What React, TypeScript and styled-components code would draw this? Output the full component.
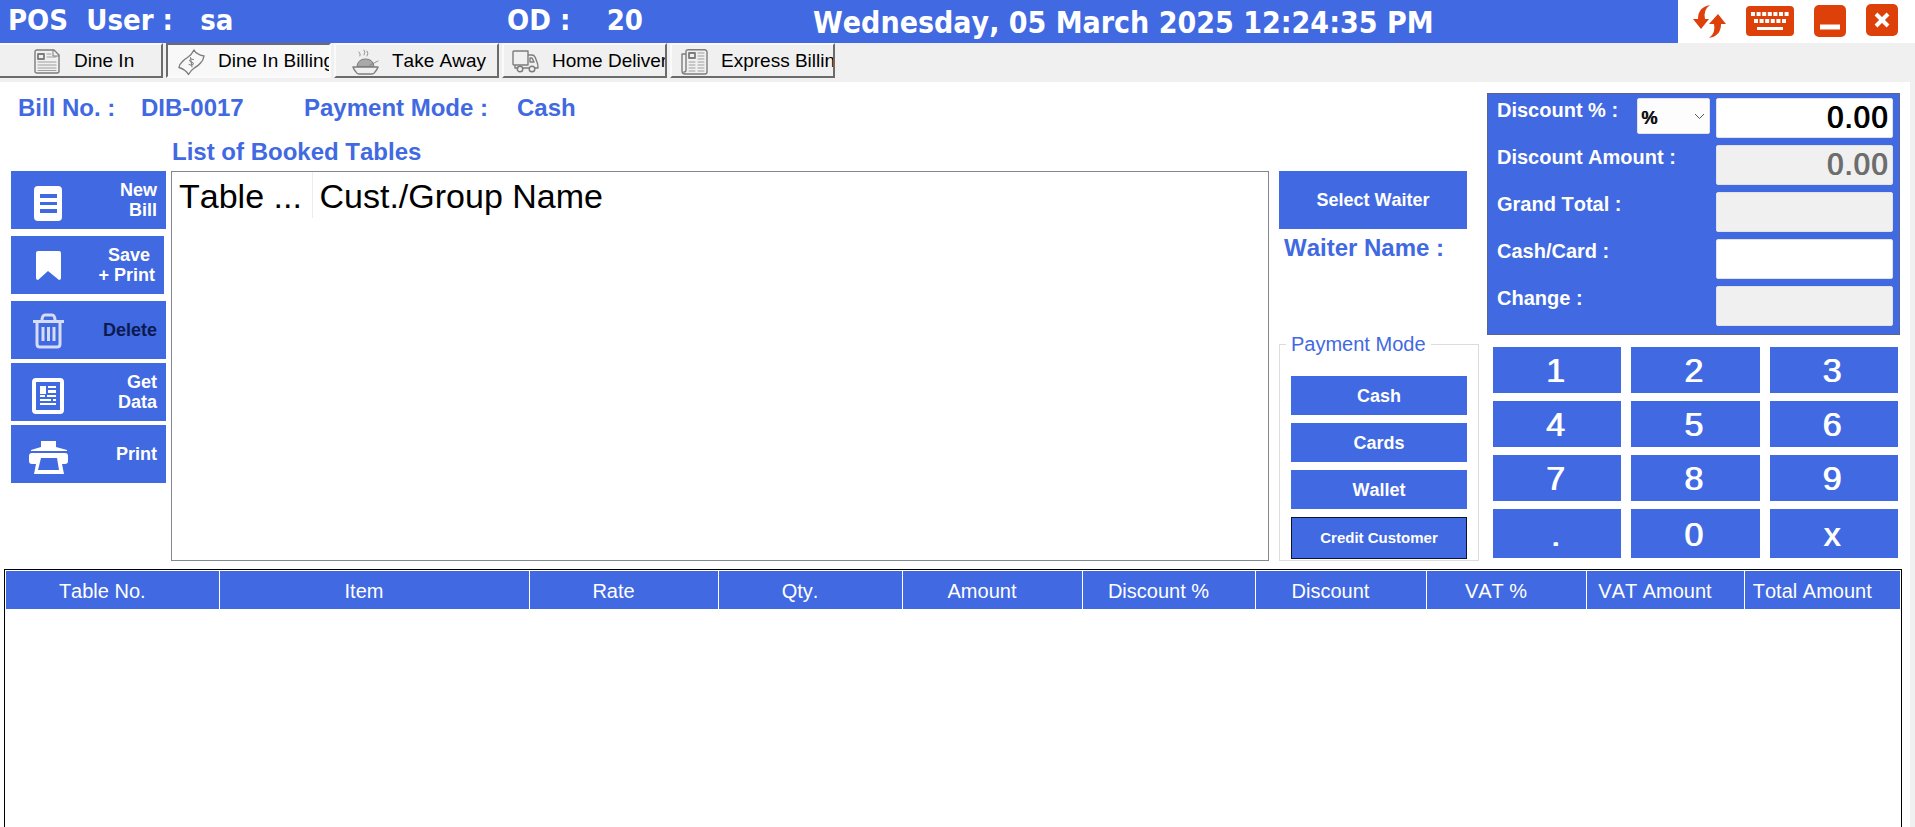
import React, { ReactNode } from "react";
import styled, { createGlobalStyle } from "styled-components";

const BLUE = "#4169e1";
const RED = "#dd4009";
const GREY = "#f0f0f0";

const GlobalStyle = createGlobalStyle`
  *, *::before, *::after { box-sizing: border-box; }
  body {
    margin: 0;
    background: #ffffff;
    color: #000000;
    font-family: "Liberation Sans", Arial, sans-serif;
    font-size: 20px;
    font-kerning: none;
  }
  button, input, select { font-family: inherit; font-kerning: none; margin: 0; }
`;

const Page = styled.div`
  min-height: 100vh;
  display: flex;
  flex-direction: column;
`;

const TopBar = styled.header`
  display: flex;
  height: 43px;
`;

const Banner = styled.div`
  flex: 1;
  display: grid;
  grid-template-columns: 499px 306px 1fr;
  align-items: start;
  padding-left: 8px;
  background: ${BLUE};
  color: #ffffff;
  font-family: "DejaVu Sans Condensed", "DejaVu Sans", sans-serif;
  font-stretch: condensed;
  font-weight: bold;
  font-size: 29px;
  line-height: 40px;
  white-space: pre;
  time { padding-top: 3px; font-size: 30px; }
`;

const WindowTools = styled.nav`
  width: 237px;
  display: flex;
  align-items: center;
  justify-content: space-between;
  padding: 0 17px 2px 15px;
`;

const ToolButton = styled.button`
  display: flex;
  border: 0;
  padding: 0;
  background: none;
  cursor: pointer;
`;

const TabBar = styled.nav`
  display: flex;
  gap: 3px;
  height: 39px;
  padding-bottom: 4px;
  background: ${GREY};
`;

const Tab = styled.button<{ $active?: boolean; $first?: boolean; $indent: number }>`
  width: ${(p) => (p.$first ? 163 : 165)}px;
  display: flex;
  align-items: center;
  gap: 13px;
  padding: 0 0 0 ${(p) => p.$indent}px;
  overflow: hidden;
  border: 2px solid;
  border-color: ${(p) =>
    p.$active ? "#6b6b6b #fafafa #fafafa #6b6b6b" : "#fafafa #6b6b6b #6b6b6b #fafafa"};
  border-left-width: ${(p) => (p.$first ? 0 : 2)}px;
  background: ${(p) => (p.$active ? "#f8f8f8" : GREY)};
  color: #000000;
  font-size: 19px;
  line-height: 24px;
  white-space: nowrap;
  svg { flex: none; margin-top: 4px; }
`;

const Workspace = styled.main`
  flex: 1;
  display: flex;
  flex-direction: column;
  gap: 8px;
  padding: 11px 8px 0 4px;
  border-right: 5px solid ${GREY};
`;

const Upper = styled.div`
  display: flex;
  gap: 8px;
  padding: 0 2px 0 7px;
`;

const Booking = styled.section`
  flex: 1;
  min-width: 0;
  display: flex;
  flex-direction: column;
`;

const InfoRow = styled.div`
  display: grid;
  grid-template-columns: 123px 163px 213px 1fr;
  padding-left: 7px;
`;

const Label = styled.span`
  color: ${BLUE};
  font-weight: bold;
  font-size: 24px;
  line-height: 30px;
  white-space: nowrap;
`;

const ListTitle = styled.h2`
  margin: 14px 0 4px 161px;
  color: ${BLUE};
  font-weight: bold;
  font-size: 24px;
  line-height: 30px;
`;

const BookingBody = styled.div`
  flex: 1;
  display: flex;
`;

const Actions = styled.div`
  width: 155px;
  display: flex;
  flex-direction: column;
  gap: 7px;
`;

const ActionGroup = styled.div`
  display: flex;
  flex-direction: column;
  gap: 4px;
`;

const ActionButton = styled.button<{ $short?: boolean }>`
  width: ${(p) => (p.$short ? 153 : 155)}px;
  height: 58px;
  display: flex;
  align-items: center;
  justify-content: space-between;
  border: 0;
  padding: 0 9px 0 15px;
  background: ${BLUE};
  color: #ffffff;
  font-weight: bold;
  font-size: 18px;
  line-height: 20px;
  text-align: right;
  white-space: pre;
  &:disabled { color: #0b1b52; }
  svg { flex: none; }
`;

const BookedList = styled.div`
  flex: 1;
  min-width: 0;
  margin: 0 10px 0 5px;
  border: 1px solid #828790;
`;

const BookedTable = styled.table`
  width: 100%;
  border-collapse: collapse;
  table-layout: fixed;
  th {
    height: 46px;
    padding: 2px 0 0 7px;
    font-weight: normal;
    font-size: 34px;
    line-height: 40px;
    text-align: left;
    white-space: nowrap;
  }
  th:first-child { width: 140px; border-right: 1px solid #ececec; }
`;

const WaiterColumn = styled.div`
  width: 200px;
  display: flex;
  flex-direction: column;
`;

const BlueButton = styled.button<{ $tall?: boolean; $small?: boolean; $focused?: boolean }>`
  height: ${(p) => (p.$tall ? 58 : p.$focused ? 42 : 39)}px;
  border: ${(p) => (p.$focused ? "1px solid #0a1430" : "0")};
  padding: 0;
  background: ${BLUE};
  color: #ffffff;
  font-weight: bold;
  font-size: ${(p) => (p.$small ? 15 : 18)}px;
  line-height: 20px;
`;

const WaiterTop = styled.div`
  display: flex;
  flex-direction: column;
  gap: 4px;
  padding-right: 12px;
  ${Label} { padding-left: 5px; }
`;

const PaymentModes = styled.fieldset`
  min-width: 0;
  margin: auto 0 0;
  display: flex;
  flex-direction: column;
  gap: 8px;
  border: 1px solid #dcdcdc;
  padding: 20px 11px 1px;
  legend {
    margin-left: -5px;
    padding: 0 5px;
    color: ${BLUE};
    font-size: 20px;
    line-height: 24px;
  }
`;

const Billing = styled.section`
  width: 413px;
  display: flex;
  flex-direction: column;
  gap: 12px;
`;

const Totals = styled.div`
  display: grid;
  grid-template-columns: 1fr 73px 177px;
  gap: 7px 6px;
  border: 1px solid #5a6492;
  padding: 4px 6px 8px 9px;
  background: ${BLUE};
`;

const TotalLabel = styled.label<{ $wide?: boolean }>`
  grid-column: ${(p) => (p.$wide ? "span 2" : "auto")};
  color: #ffffff;
  font-weight: bold;
  font-size: 20px;
  line-height: 24px;
  white-space: nowrap;
`;

const Amount = styled.input`
  width: 100%;
  height: 40px;
  border: 1px solid #e3e3e3;
  border-radius: 2px;
  padding: 0 4px 2px;
  background: #ffffff;
  color: #000000;
  font-family: "DejaVu Sans Condensed", "DejaVu Sans", sans-serif;
  font-stretch: condensed;
  font-size: 31px;
  text-align: right;
  text-shadow: 1px 0 0 currentColor;
  &:disabled { background: ${GREY}; color: #6d6d6d; }
`;

const SelectBox = styled.div`
  position: relative;
  height: 36px;
  select {
    width: 100%;
    height: 100%;
    appearance: none;
    border: 1px solid #e3e3e3;
    border-radius: 2px;
    padding: 4px 0 0 3px;
    background: #fdfdfd;
    color: #000000;
    font-size: 18px;
    text-shadow: 1px 0 0 currentColor;
  }
  svg {
    position: absolute;
    right: 5px;
    top: 15px;
    pointer-events: none;
  }
`;

const Keypad = styled.div`
  display: grid;
  grid-template-columns: repeat(3, 1fr);
  grid-template-rows: 46px 46px 46px 49px;
  gap: 8px 10px;
  padding: 0 2px 3px 6px;
`;

const Key = styled.button`
  border: 0;
  padding: 0 4px 0 0;
  background: ${BLUE};
  color: #ffffff;
  font-size: 34px;
  line-height: 40px;
  text-shadow: 1px 0 0 currentColor;
`;

const OrderGrid = styled.div`
  flex: 1;
  border: 1px solid #000000;
  border-bottom: 0;
  padding: 1px;
`;

const OrderTable = styled.table`
  width: 100%;
  border-collapse: collapse;
  table-layout: fixed;
  th {
    height: 38px;
    padding: 1px 20px 0 0;
    background: ${BLUE};
    color: #ffffff;
    font-weight: normal;
    font-size: 20px;
    line-height: 24px;
    text-align: center;
    white-space: nowrap;
  }
  th + th { border-left: 1px solid #ffffff; }
`;

const TabIcon = ({ children }: { children: ReactNode }) => (
  <svg width="27" height="27" viewBox="0 0 27 27" fill="none" stroke="#7c7c7c" strokeWidth="1.4" strokeLinejoin="round" strokeLinecap="round" aria-hidden="true">
    {children}
  </svg>
);

const ActionIcon = ({ children, muted }: { children: ReactNode; muted?: boolean }) => (
  <svg width="44" height="46" viewBox="0 0 44 46" fill={muted ? "#d5dcf5" : "#ffffff"} aria-hidden="true">
    {children}
  </svg>
);

const tabs = [
  {
    name: "Dine In",
    indent: 34,
    icon: (
      <TabIcon>
        <path d="M4 1H20L25 6V22Q25 24 23 24H3Q1 24 1 22V3Q1 1 3 1Z" />
        <path d="M19 1V7H25" strokeWidth="1" />
        <rect x="4" y="5" width="6" height="5" strokeWidth="1.8" />
        <path d="M13 5H17M13 8H22M4 13H22M4 16H22M4 19H22M4 21.500H22" strokeWidth="0.7" />
      </TabIcon>
    ),
  },
  {
    name: "Dine In Billing",
    indent: 10,
    icon: (
      <TabIcon>
        <path d="M16 1Q17.500 4 19.500 4.500Q22 6.500 26 7Q25.500 11 22.500 14Q20 17 17 18.500Q13 21 10.500 25.500Q9 23 7 21.500Q4.500 19.500 1 18.500Q1.500 15 4.500 12.500Q6 10.500 9.500 8.500Q13.500 6 16 1Z" />
        <path d="M15.500 10.500Q12 9 11.500 11.200Q11.500 13 13.500 13Q16 13.500 15.200 15.500Q13.500 17 11 15.500M12.500 8.500L14 18" strokeWidth="1" />
      </TabIcon>
    ),
  },
  {
    name: "Take Away",
    indent: 16,
    icon: (
      <TabIcon>
        <path d="M1 18H26Q25 21 23 23Q22 25 20 25H7Q5 25 4 23Q2 21 1 18Z" />
        <path d="M5 17Q6 10 13.500 10Q21 10 22 17Z" fill="#a9a9a9" strokeWidth="1" />
        <path d="M18 16L26 12M8 7Q9 5 7 3M12 6Q14 3 12 1M15 7Q17 4 15 2" strokeWidth="0.8" />
      </TabIcon>
    ),
  },
  {
    name: "Home Delivery",
    indent: 8,
    icon: (
      <TabIcon>
        <path d="M6 19H3Q3 17 3 16M2 2H16V16H2Q1 16 1 15V3Q1 2 2 2ZM17 6H20Q22 6 23 8L25 13Q26 15 26 19H23M17 19H11M18 9H20L22 13H18Z" />
        <circle cx="8" cy="20" r="2.800" />
        <circle cx="20" cy="20" r="2.800" />
      </TabIcon>
    ),
  },
  {
    name: "Express Billing",
    indent: 9,
    icon: (
      <TabIcon>
        <path d="M7 0.700H24Q26 1 26 3V23Q26 25 24 25H4Q1 25 1 22V5H5V21Q5 23 3 23M5 5V2Q5 1 7 0.700" />
        <rect x="8" y="4" width="6" height="5" strokeWidth="1.800" />
        <path d="M17 4H23M17 7H23M17 10H23M8 13H14M8 16H14M8 19H14M8 22H14M17 13H23M17 16H23M17 19H23M17 22H23" strokeWidth="0.7" />
      </TabIcon>
    ),
  },
];

const columns: [string, number][] = [
  ["Table No.", 213],
  ["Item", 310],
  ["Rate", 189],
  ["Qty.", 184],
  ["Amount", 180],
  ["Discount %", 173],
  ["Discount", 171],
  ["VAT %", 160],
  ["VAT Amount", 158],
  ["Total Amount", 156],
];

const keys = ["1", "2", "3", "4", "5", "6", "7", "8", "9", ".", "0", "x"];

const totals = [
  { id: "discount-amount", label: "Discount Amount :", value: "0.00", disabled: true },
  { id: "grand-total", label: "Grand Total :", value: "", disabled: true },
  { id: "cash-card", label: "Cash/Card :", value: "", disabled: false },
  { id: "change", label: "Change :", value: "", disabled: true },
];

export default function App() {
  return (
    <Page>
      <GlobalStyle />
      <TopBar>
        <Banner>
          <span>{"POS  User :   sa"}</span>
          <span>{"OD :    20"}</span>
          <time>Wednesday, 05 March 2025 12:24:35 PM</time>
        </Banner>
        <WindowTools aria-label="Window">
          <ToolButton aria-label="Refresh">
            <svg width="33" height="34" viewBox="0 0 33 34" fill={RED}>
              <path d="M17 1Q5 3 5 15H0L8 25L16 15H12Q10 6 17 1Z" />
              <path d="M16 34Q28 32 28 20H33L25 10L16 20H21Q23 29 16 34Z" />
            </svg>
          </ToolButton>
          <ToolButton aria-label="Keyboard">
            <svg width="48" height="34" viewBox="0 0 48 34">
              <rect y="2" width="48" height="30" rx="4" fill={RED} />
              <path d="M5 10H43" stroke="#fff" strokeWidth="4" strokeDasharray="4 1.600" />
              <path d="M8 17H40" stroke="#fff" strokeWidth="4" strokeDasharray="4 1.600" />
              <path d="M11 24.500H37" stroke="#fff" strokeWidth="3" />
            </svg>
          </ToolButton>
          <ToolButton aria-label="Minimize">
            <svg width="32" height="34" viewBox="0 0 32 34">
              <rect y="1" width="32" height="32" rx="5" fill={RED} />
              <path d="M6 23H26" stroke="#fff" strokeWidth="5" />
            </svg>
          </ToolButton>
          <ToolButton aria-label="Close">
            <svg width="32" height="34" viewBox="0 0 32 34">
              <rect width="32" height="32" rx="5" fill={RED} />
              <path d="M10 10L22 22M22 10L10 22" stroke="#fff" strokeWidth="4" />
            </svg>
          </ToolButton>
        </WindowTools>
      </TopBar>

      <TabBar>
        {tabs.map((tab, i) => (
          <Tab key={tab.name} $first={i === 0} $active={i === 1} $indent={tab.indent}>
            {tab.icon}
            {tab.name}
          </Tab>
        ))}
      </TabBar>

      <Workspace>
        <Upper>
          <Booking>
            <InfoRow>
              <Label>Bill No. :</Label>
              <Label>DIB-0017</Label>
              <Label>Payment Mode :</Label>
              <Label>Cash</Label>
            </InfoRow>
            <ListTitle>List of Booked Tables</ListTitle>
            <BookingBody>
              <Actions>
                <ActionButton>
                  <ActionIcon>
                    <path fillRule="evenodd" d="M12 9H32Q36 9 36 13V40Q36 44 32 44H12Q8 44 8 40V13Q8 9 12 9ZM14 17V21H31V17ZM14 25V28H31V25ZM14 32V36H31V32Z" />
                  </ActionIcon>
                  {"New\nBill"}
                </ActionButton>
                <ActionButton $short>
                  <ActionIcon>
                    <path d="M12 9H33Q35 9 35 11V36Q35 38 33 38L22 29L12 38Q10 38 10 36V11Q10 9 12 9Z" />
                  </ActionIcon>
                  {"Save\u00a0\n+ Print"}
                </ActionButton>
                <ActionGroup>
                  <ActionButton disabled>
                    <ActionIcon muted>
                      <path d="M11 14V37Q11 40 14 40H31Q34 40 34 37V14M7 14.500H38M16 14Q16 8 19 8H26Q29 8 29 14M17 20V34M22.500 20V34M28 20V34" fill="none" stroke="#d5dcf5" strokeWidth="3" />
                    </ActionIcon>
                    Delete
                  </ActionButton>
                  <ActionButton>
                    <ActionIcon>
                      <rect x="8" y="11" width="28" height="32" rx="2" fill="none" stroke="#fff" strokeWidth="4" />
                      <path d="M14 17H20V25H14ZM22 17H30V19H22ZM22 21H30V24H22ZM14 26H19V28H14ZM21 26H30V28H21ZM14 30H25V32H14ZM27 30H30V32H27ZM14 34H30V36H14Z" />
                    </ActionIcon>
                    {"Get\nData"}
                  </ActionButton>
                  <ActionButton>
                    <ActionIcon>
                      <path d="M15 10H30V16L41 19V20H5V19L15 16Z" />
                      <path fillRule="evenodd" d="M6 22H39Q42 22 42 25V30Q42 33 39 33H36L38 43H8L10 33H6Q3 33 3 30V25Q3 22 6 22ZM15 27L12 39H33L31 27Z" />
                    </ActionIcon>
                    Print
                  </ActionButton>
                </ActionGroup>
              </Actions>

              <BookedList>
                <BookedTable>
                  <thead>
                    <tr>
                      <th>Table ...</th>
                      <th>Cust./Group Name</th>
                    </tr>
                  </thead>
                </BookedTable>
              </BookedList>

              <WaiterColumn>
                <WaiterTop>
                  <BlueButton $tall>Select Waiter</BlueButton>
                  <Label>Waiter Name :</Label>
                </WaiterTop>
                <PaymentModes>
                  <legend>Payment Mode</legend>
                  <BlueButton>Cash</BlueButton>
                  <BlueButton>Cards</BlueButton>
                  <BlueButton>Wallet</BlueButton>
                  <BlueButton $small $focused>Credit Customer</BlueButton>
                </PaymentModes>
              </WaiterColumn>
            </BookingBody>
          </Booking>

          <Billing>
            <Totals>
              <TotalLabel htmlFor="discount">Discount % :</TotalLabel>
              <SelectBox>
                <select aria-label="Discount type" defaultValue="%">
                  <option>%</option>
                </select>
                <svg width="11" height="7" viewBox="0 0 11 7" fill="none" stroke="#555" aria-hidden="true">
                  <path d="M1 1L5.500 5.500L10 1" />
                </svg>
              </SelectBox>
              <Amount id="discount" defaultValue="0.00" />
              {totals.map((t) => (
                <React.Fragment key={t.id}>
                  <TotalLabel $wide htmlFor={t.id}>{t.label}</TotalLabel>
                  <Amount id={t.id} defaultValue={t.value} disabled={t.disabled} />
                </React.Fragment>
              ))}
            </Totals>
            <Keypad>
              {keys.map((k) => (
                <Key key={k}>{k}</Key>
              ))}
            </Keypad>
          </Billing>
        </Upper>

        <OrderGrid>
          <OrderTable>
            <colgroup>
              {columns.map(([name, width]) => (
                <col key={name} style={{ width }} />
              ))}
            </colgroup>
            <thead>
              <tr>
                {columns.map(([name]) => (
                  <th key={name} scope="col">{name}</th>
                ))}
              </tr>
            </thead>
          </OrderTable>
        </OrderGrid>
      </Workspace>
    </Page>
  );
}
